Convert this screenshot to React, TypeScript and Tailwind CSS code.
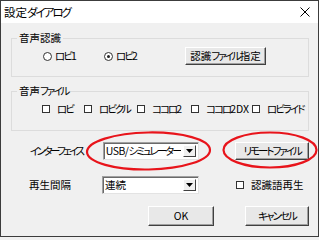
import React from 'react';

// katakana runs: tighten to match the narrow proportional kana of the original
const K: React.FC<{ children: React.ReactNode; className?: string }> = ({ children, className = 'tracking-[-2px]' }) => (
  <span className={className}>{children}</span>
);

const Radio: React.FC<{ label: React.ReactNode; checked?: boolean }> = ({ label, checked }) => (
  <label className="flex items-center w-[61px]">
    <span className="w-[9px] h-[9px] rounded-full border border-[#333] bg-white flex items-center justify-center">
      {checked && <span className="w-[3px] h-[3px] rounded-full bg-[#222]" />}
    </span>
    <span className="ml-[3px]">{label}</span>
  </label>
);

const Check: React.FC<{ label: React.ReactNode; className?: string }> = ({ label, className = '' }) => (
  <label className={`flex items-center ${className}`}>
    <span className="w-[8px] h-[8px] border border-[#333] bg-white" />
    <span className="ml-[7px]">{label}</span>
  </label>
);

const Btn: React.FC<{ label: React.ReactNode; className?: string }> = ({ label, className = '' }) => (
  <button
    type="button"
    className={`bg-[#e8e8e8] border border-t-white border-l-white border-r-[#404040] border-b-[#404040] shadow-[inset_-1px_-1px_0_#a0a0a0] flex items-center justify-center whitespace-nowrap ${className}`}
  >
    {label}
  </button>
);

const Combo: React.FC<{ value: React.ReactNode; className?: string }> = ({ value, className = '' }) => (
  <div className={`flex bg-white border border-t-[#a0a0a0] border-l-[#a0a0a0] border-r-[#e3e3e3] border-b-[#e3e3e3] shadow-[inset_1px_1px_0_#696969] ${className}`}>
    <span className="flex-1 flex items-center pl-[2px] overflow-hidden">{value}</span>
    <span className="w-[13px] m-[2px] bg-[#f0f0f0] border border-t-white border-l-white border-r-[#404040] border-b-[#404040] flex items-center justify-center">
      <svg width="7" height="4" viewBox="0 0 7 4">
        <path d="M0 0h7L3.5 4z" fill="#000" />
      </svg>
    </span>
  </div>
);

export default function App() {
  return (
    <div className="w-[319px] h-[240px] bg-[#f0f0f0] relative overflow-hidden font-['Noto_Sans_CJK_JP',sans-serif] [font-feature-settings:'palt'] text-[10.5px] leading-[12px] text-black whitespace-nowrap">
      <div className="h-[237px] border border-[#3c3c3c] flex flex-col">
        <div className="h-[22px] bg-white flex items-center justify-between pl-[3px] pr-[8px]">
          <span className="text-[11.5px]">設定<K>ダイアログ</K></span>
          <svg width="10" height="10" viewBox="0 0 10 10">
            <path d="M0.5 0.5l9 9M9.5 0.5l-9 9" stroke="#000" strokeWidth="1" />
          </svg>
        </div>
        <div className="flex-1 flex flex-col pl-[10px] pr-[9px] pt-[9px]">
          <fieldset className="border border-[#dcdcdc]">
            <legend className="ml-[5px] px-[2px] leading-[12px]">音声認識</legend>
            <div className="flex items-center h-[18px] mt-[3px] mb-[11px] pl-[31px]">
              <Radio label={<><K>ロビ</K>1</>} />
              <Radio label={<><K>ロビ</K>2</>} checked />
              <Btn label={<>認識<K>ファイル</K>指定</>} className="ml-[20px] w-[81px] h-[18px]" />
            </div>
          </fieldset>
          <fieldset className="border border-[#dcdcdc] mt-[8px]">
            <legend className="ml-[5px] px-[2px] leading-[12px]">音声<K>ファイル</K></legend>
            <div className="flex items-center h-[12px] mt-[6px] mb-[15px] pl-[30px]">
              <Check label={<K>ロビ</K>} className="w-[42px]" />
              <Check label={<K>ロビクル</K>} className="w-[53px]" />
              <Check label={<><K>ココロ</K>2</>} className="w-[54px]" />
              <Check label={<><K>ココロ</K>2DX</>} className="w-[61px]" />
              <Check label={<K>ロビライド</K>} />
            </div>
          </fieldset>
          <div className="flex items-center mt-[10px] h-[19px]">
            <span className="w-[92px] pl-[19px]"><K className="tracking-[-2.6px]">インターフェイス</K></span>
            <Combo value={<span className="tracking-[-0.5px]">USB/<K>シミュレーター</K></span>} className="w-[97px] h-[18px]" />
            <Btn label={<K>リモートファイル</K>} className="ml-[36px] w-[74px] h-[18px]" />
          </div>
          <div className="flex items-center mt-[16px] h-[18px]">
            <span className="w-[91px] pl-[18px]">再生間隔</span>
            <Combo value="連続" className="w-[97px] h-[18px]" />
            <Check label="認識語再生" className="ml-[37px]" />
          </div>
          <div className="flex items-center mt-[12px] h-[20px]">
            <Btn label="OK" className="ml-[137px] w-[66px] h-[20px]" />
            <Btn label={<K>キャンセル</K>} className="ml-[31px] w-[64px] h-[20px]" />
          </div>
        </div>
      </div>
      <svg className="absolute inset-0 pointer-events-none" width="319" height="240" viewBox="0 0 319 240">
        <ellipse cx="148.5" cy="151" rx="61.5" ry="18.5" fill="none" stroke="#e8141b" strokeWidth="2.2" transform="rotate(-1 148 151)" />
        <ellipse cx="270" cy="150" rx="46.5" ry="17.5" fill="none" stroke="#e8141b" strokeWidth="2.2" />
      </svg>
    </div>
  );
}
